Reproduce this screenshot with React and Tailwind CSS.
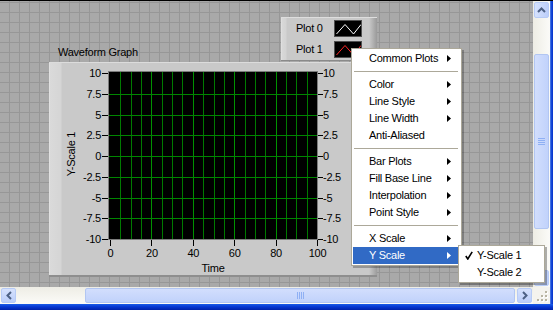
import React from 'react';

const yTicks = [10, 7.5, 5, 2.5, 0, -2.5, -5, -7.5, -10];
const xTicks = [0, 20, 40, 60, 80, 100];

// plot inner area (frame-local): x 60..268, y 9..176
const PLOT_X = 60;
const PLOT_Y = 9;
const yAt = (v) => PLOT_Y + 1 + ((10 - v) / 20) * 166;
const xAt = (v) => PLOT_X + 1 + (v / 100) * 207;

const menuItems = [
  { label: 'Common Plots', sub: true },
  { sep: true },
  { label: 'Color', sub: true },
  { label: 'Line Style', sub: true },
  { label: 'Line Width', sub: true },
  { label: 'Anti-Aliased' },
  { sep: true },
  { label: 'Bar Plots', sub: true },
  { label: 'Fill Base Line', sub: true },
  { label: 'Interpolation', sub: true },
  { label: 'Point Style', sub: true },
  { sep: true },
  { label: 'X Scale', sub: true },
  { label: 'Y Scale', sub: true, active: true },
];

function Arrow({ white }) {
  return (
    <svg width="4" height="7" viewBox="0 0 4 7">
      <polygon points="0,0 4,3.5 0,7" fill={white ? '#fff' : '#000'} />
    </svg>
  );
}

function PlotGrid() {
  const lines = [];
  for (let i = 1; i < 20; i++) {
    const x = Math.round(1 + i * 10.35) + 0.5;
    const major = i % 4 === 0;
    lines.push(
      <line key={'v' + i} x1={x} y1="0" x2={x} y2="167" stroke={major ? '#009200' : '#007a00'} strokeWidth="1" />,
    );
  }
  for (let j = 1; j < 8; j++) {
    const y = Math.round(1 + j * 20.75) + 0.5;
    lines.push(<line key={'h' + j} x1="0" y1={y} x2="208" y2={y} stroke="#008600" strokeWidth="1" />);
  }
  return (
    <svg width="208" height="167" className="block">
      {lines}
    </svg>
  );
}

function WaveformGraph() {
  return (
    <div className="absolute left-[49px] top-[61px] w-[328px] h-[215px] border-t border-t-[#dcdcdc] border-b-2 border-b-[#8e8e8e] bg-[linear-gradient(to_right,#e8e8e8_0px,#dadada_1px,#d5d5d5_12px,#c9c9c9_13px,#c9c9c9_calc(100%_-_8px),#9c9c9c_100%)]">
      {/* plot area */}
      <div className="absolute left-[59px] top-[8px] border border-[#7c7c7c] bg-black">
        <PlotGrid />
      </div>

      {/* y axis, both sides */}
      {yTicks.map((v) => (
        <React.Fragment key={'l' + v}>
          <div className="absolute left-0 w-[52px] text-right leading-[14px]" style={{ top: yAt(v) - 7 }}>
            {v}
          </div>
          <div className="absolute left-[53px] w-[6px] h-px bg-black" style={{ top: yAt(v) }} />
          <div className="absolute left-[269px] w-[5px] h-px bg-black" style={{ top: yAt(v) }} />
          <div className="absolute left-[274px] leading-[14px]" style={{ top: yAt(v) - 7 }}>
            {v}
          </div>
        </React.Fragment>
      ))}

      {/* x axis */}
      {xTicks.map((v) => (
        <React.Fragment key={'x' + v}>
          <div className="absolute top-[177px] w-px h-[6px] bg-black" style={{ left: xAt(v) }} />
          <div className="absolute top-[183px] -translate-x-1/2 leading-[14px]" style={{ left: xAt(v) + 0.5 }}>
            {v}
          </div>
        </React.Fragment>
      ))}
      <div className="absolute top-[198px] left-[164px] -translate-x-1/2 leading-[14px]">Time</div>

      <div className="absolute left-[22px] top-[91px] -translate-x-1/2 -translate-y-1/2 -rotate-90 whitespace-nowrap leading-[14px]">
        Y-Scale 1
      </div>
    </div>
  );
}

function Swatch({ color }) {
  return (
    <div className="w-[28px] h-[17px] bg-black border border-[#505050]">
      <svg width="26" height="15" className="block">
        <polyline points="1.5,13 10,3.5 18.5,13 26,3.5" fill="none" stroke={color} strokeWidth="1" />
      </svg>
    </div>
  );
}

function PlotLegend() {
  return (
    <div className="absolute left-[281px] top-[16px] w-[96px] h-[44px] flex flex-col border-t border-t-[#dedede] border-b border-b-[#8a8a8a] bg-[linear-gradient(to_right,#e6e6e6_0px,#d8d8d8_1px,#d3d3d3_5px,#c9c9c9_6px,#c9c9c9_calc(100%_-_8px),#9a9a9a_100%)]">
      {[
        { name: 'Plot 0', color: '#ffffff' },
        { name: 'Plot 1', color: '#ff2a2a' },
      ].map((p) => (
        <div key={p.name} className="h-[21px] flex items-center pl-[15px]">
          <span className="w-[38px]">{p.name}</span>
          <Swatch color={p.color} />
        </div>
      ))}
    </div>
  );
}

function VScrollbar() {
  return (
    <div className="w-[17px] flex flex-col bg-[linear-gradient(to_right,#eeede5,#fbfbf8)] py-[1px] px-[1px]">
      <div className="h-[16px] rounded-[2px] border border-[#b7cbf6] bg-[linear-gradient(to_right,#d6e2fd,#bccefa)] flex items-center justify-center">
        <svg width="9" height="6" viewBox="0 0 9 6">
          <polyline points="1,5 4.5,1.5 8,5" fill="none" stroke="#4d6185" strokeWidth="2" />
        </svg>
      </div>
      <div className="h-[36px]" />
      <div className="h-[175px] rounded-[2px] border border-[#b2c6f2] bg-[linear-gradient(to_right,#d2defd,#c1d2fb)] flex items-center justify-center">
        <div className="flex flex-col gap-[1px]">
          <div className="w-[7px] h-px bg-[#8fb0f4]" />
          <div className="w-[7px] h-px bg-[#8fb0f4]" />
          <div className="w-[7px] h-px bg-[#8fb0f4]" />
          <div className="w-[7px] h-px bg-[#8fb0f4]" />
        </div>
      </div>
      <div className="flex-1" />
      <div className="h-[16px] rounded-[2px] border border-[#b7cbf6] bg-[linear-gradient(to_right,#d6e2fd,#bccefa)]" />
    </div>
  );
}

function HScrollbar() {
  return (
    <div className="w-[533px] flex bg-[linear-gradient(to_bottom,#eeede5,#fbfbf8)] py-[1px] px-[1px]">
      <div className="w-[15px] rounded-[2px] border border-[#b7cbf6] bg-[linear-gradient(to_bottom,#d6e2fd,#bccefa)] flex items-center justify-center">
        <svg width="6" height="9" viewBox="0 0 6 9">
          <polyline points="5,1 1.5,4.5 5,8" fill="none" stroke="#4d6185" strokeWidth="2" />
        </svg>
      </div>
      <div className="w-[69px]" />
      <div className="w-[430px] rounded-[2px] border border-[#b2c6f2] bg-[linear-gradient(to_bottom,#d2defd,#c1d2fb)] flex items-center justify-center">
        <div className="flex gap-[1px]">
          <div className="h-[7px] w-px bg-[#8fb0f4]" />
          <div className="h-[7px] w-px bg-[#8fb0f4]" />
          <div className="h-[7px] w-px bg-[#8fb0f4]" />
          <div className="h-[7px] w-px bg-[#8fb0f4]" />
        </div>
      </div>
      <div className="flex-1" />
      <div className="w-[15px] rounded-[2px] border border-[#b7cbf6] bg-[linear-gradient(to_bottom,#d6e2fd,#bccefa)] flex items-center justify-center">
        <svg width="6" height="9" viewBox="0 0 6 9">
          <polyline points="1,1 4.5,4.5 1,8" fill="none" stroke="#4d6185" strokeWidth="2" />
        </svg>
      </div>
    </div>
  );
}

function SizeGrip() {
  const dots = [
    [12, 4],
    [8, 8],
    [12, 8],
    [4, 12],
    [8, 12],
    [12, 12],
  ];
  return (
    <div className="w-[17px] bg-[#f4f3ee]">
      <svg width="17" height="17">
        {dots.map(([x, y]) => (
          <React.Fragment key={x + '-' + y}>
            <rect x={x + 1} y={y + 1} width="2" height="2" fill="#ffffff" />
            <rect x={x} y={y} width="2" height="2" fill="#b8b4a2" />
          </React.Fragment>
        ))}
      </svg>
    </div>
  );
}

function ContextMenu() {
  return (
    <div className="absolute left-[351px] top-[48px] w-[111px] bg-white border border-[#aca899] p-[1px] shadow-[2px_2px_0_rgba(0,0,0,0.25)]">
      {menuItems.map((it, i) =>
        it.sep ? (
          <div key={i} className="h-[9px] flex items-center pl-[1px] pr-[2px]">
            <div className="h-px w-full bg-[#aca899]" />
          </div>
        ) : (
          <div
            key={i}
            className={
              'h-[17px] flex items-center justify-between pl-[16px] pr-[9px] ' +
              (it.active ? 'bg-[#316ac5] text-white' : 'text-black')
            }
          >
            <span>{it.label}</span>
            {it.sub && <Arrow white={it.active} />}
          </div>
        ),
      )}
    </div>
  );
}

function SubMenu() {
  return (
    <div className="absolute left-[458px] top-[245px] w-[87px] bg-white border border-[#aca899] p-[1px] shadow-[2px_2px_0_rgba(0,0,0,0.3)]">
      {['Y-Scale 1', 'Y-Scale 2'].map((s, i) => (
        <div key={s} className="h-[17px] flex items-center">
          <div className="w-[17px] flex justify-center">
            {i === 0 && (
              <svg width="8" height="9" viewBox="0 0 8 9">
                <polyline points="0.8,5 2.8,8 7.2,0.8" fill="none" stroke="#000" strokeWidth="1.6" />
              </svg>
            )}
          </div>
          <span>{s}</span>
        </div>
      ))}
    </div>
  );
}

export default function App() {
  return (
    <div className="relative w-[553px] h-[310px] overflow-hidden bg-[#a9a9a9] text-[11px] tracking-[-0.25px] text-black font-['Liberation_Sans',Arial,sans-serif] select-none">
      <div className="h-px bg-black" />
      <div className="flex h-[303px]">
        <div className="w-[550px] flex flex-col">
          <div className="flex h-[286px]">
            {/* front panel canvas */}
            <div className="relative w-[533px] bg-[#a9a9a9] bg-[linear-gradient(to_right,#979797_1px,transparent_1px),linear-gradient(to_bottom,#979797_1px,transparent_1px)] bg-[size:10px_10px] bg-[position:9px_1px]">
              <div className="absolute left-[58px] top-[44px] leading-[14px]">Waveform Graph</div>
              <WaveformGraph />
              <PlotLegend />
            </div>
            <VScrollbar />
          </div>
          <div className="flex h-[17px]">
            <HScrollbar />
            <SizeGrip />
          </div>
        </div>
        <div className="w-[3px] bg-[linear-gradient(to_right,#5b85e6,#1449d8,#0831c9)]" />
      </div>
      <div className="h-[6px] bg-[linear-gradient(to_bottom,#1a5ce8,#0535d0_50%,#0022a8)]" />

      <ContextMenu />
      <SubMenu />
    </div>
  );
}
